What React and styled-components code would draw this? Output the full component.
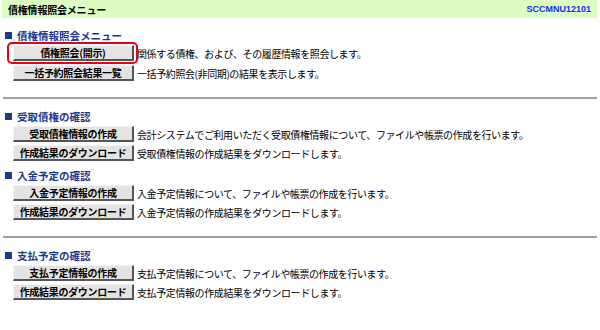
import React from "react";
import styled, { createGlobalStyle } from "styled-components";

const Global = createGlobalStyle`
  body {
    margin: 0;
    background: #fff;
    font-family: "Noto Sans CJK JP", "Liberation Sans", sans-serif;
    font-size: 10px;
    color: #000;
  }
`;

const menus = [
  {
    title: "債権情報照会メニュー",
    top: 10,
    items: [
      { label: "債権照会(開示)", text: "関係する債権、および、その履歴情報を照会します。", marked: true },
      { label: "一括予約照会結果一覧", text: "一括予約照会(非同期)の結果を表示します。" },
    ],
  },
  null,
  {
    title: "受取債権の確認",
    top: 10,
    items: [
      { label: "受取債権情報の作成", text: "会計システムでご利用いただく受取債権情報について、ファイルや帳票の作成を行います。" },
      { label: "作成結果のダウンロード", text: "受取債権情報の作成結果をダウンロードします。" },
    ],
  },
  {
    title: "入金予定の確認",
    top: 7,
    items: [
      { label: "入金予定情報の作成", text: "入金予定情報について、ファイルや帳票の作成を行います。" },
      { label: "作成結果のダウンロード", text: "入金予定情報の作成結果をダウンロードします。" },
    ],
  },
  null,
  {
    title: "支払予定の確認",
    top: 10,
    items: [
      { label: "支払予定情報の作成", text: "支払予定情報について、ファイルや帳票の作成を行います。" },
      { label: "作成結果のダウンロード", text: "支払予定情報の作成結果をダウンロードします。" },
    ],
  },
];

export default function App() {
  return (
    <Page>
      <Global />
      <TitleBar>
        <Title>債権情報照会メニュー</Title>
        <ScreenId>SCCMNU12101</ScreenId>
      </TitleBar>
      {menus.map((m, i) =>
        m === null ? (
          <Rule key={i} />
        ) : (
          <Section key={i} $top={m.top}>
            <Heading>
              <Square />
              {m.title}
            </Heading>
            <Rows $gap={i === 0 ? 4 : 3}>
              {m.items.map((it) => (
                <Row key={it.label}>
                  <MenuButton $marked={it.marked}>{it.label}</MenuButton>
                  <Desc>{it.text}</Desc>
                </Row>
              ))}
            </Rows>
          </Section>
        )
      )}
    </Page>
  );
}

const Page = styled.div`
  width: 600px;
  height: 330px;
  overflow: hidden;
`;

const TitleBar = styled.div`
  height: 18px;
  margin: 0 3px 0 2px;
  padding: 0 6px;
  background: #ddfcc3;
  display: flex;
  align-items: center;
  justify-content: space-between;
`;

const Title = styled.div`
  font-weight: bold;
  font-size: 10px;
  letter-spacing: -0.2px;
`;

const ScreenId = styled.div`
  font-family: "Liberation Sans", Arial, sans-serif;
  font-weight: bold;
  font-size: 9px;
  color: #1030f0;
`;

const Section = styled.section`
  margin-top: ${(p) => p.$top}px;
  padding-left: 5px;
`;

const Heading = styled.div`
  height: 14px;
  display: flex;
  align-items: center;
  gap: 5px;
  font-weight: bold;
  font-size: 10.5px;
  color: #1c3a8e;
`;

const Square = styled.span`
  width: 7px;
  height: 7px;
  background: #1c3a8e;
`;

const Rows = styled.div`
  margin-top: 3px;
  display: flex;
  flex-direction: column;
  gap: ${(p) => p.$gap}px;
`;

const Row = styled.div`
  display: flex;
  align-items: center;
  gap: 3px;
  padding-left: 8px;
`;

const MenuButton = styled.button`
  position: relative;
  width: 121px;
  height: 16px;
  padding: 0;
  background: #e3e3e3;
  border: 1px solid;
  border-color: #f4f4f4 #555 #555 #f4f4f4;
  border-bottom-width: 2px;
  border-right-width: 2px;
  border-radius: 0;
  font-family: "Noto Sans CJK JP", sans-serif;
  font-weight: bold;
  font-size: 10px;
  line-height: 13px;
  color: #000;
  letter-spacing: -0.3px;

  &::after {
    content: "";
    display: ${(p) => (p.$marked ? "block" : "none")};
    position: absolute;
    top: -4px;
    bottom: -5px;
    left: -7px;
    right: -6px;
    border: 2px solid #e60012;
    border-radius: 5px;
    pointer-events: none;
  }
`;

const Desc = styled.span`
  font-size: 10px;
  letter-spacing: -0.4px;
  white-space: nowrap;
`;

const Rule = styled.hr`
  margin: 16px 3px 0 3px;
  border: 0;
  border-top: 2px solid #a0a0a0;
`;
